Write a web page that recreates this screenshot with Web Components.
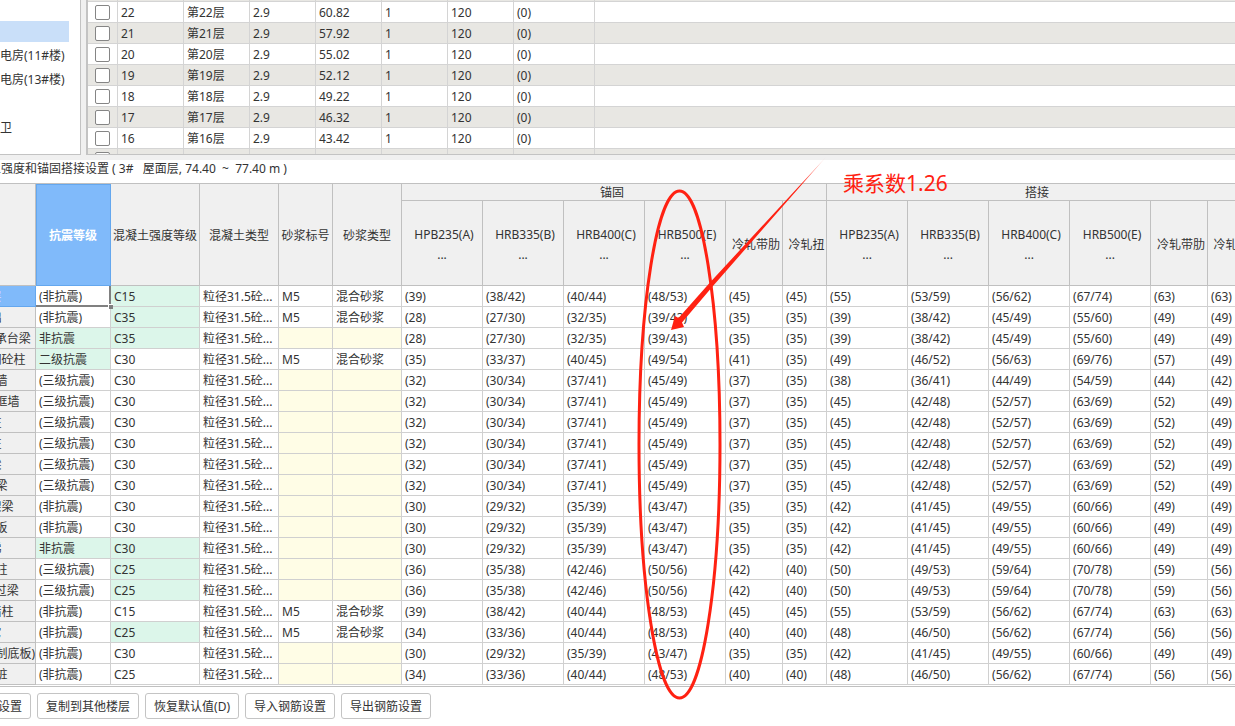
<!DOCTYPE html>
<html lang="zh-CN">
<head>
<meta charset="utf-8">
<title>楼层设置</title>
<style>
html, body { margin: 0; height: 100%; }
body { background: #fff; color: #333; font: 12px/20px "Noto Sans", "Noto Sans CJK SC", sans-serif; overflow: hidden; }
</style>
</head>
<body>
<floor-settings></floor-settings>

<template id="floor-settings">
  <style>
    :host { display: flex; flex-direction: column; min-height: 100vh; position: relative; overflow: hidden; }
    .top { display: flex; gap: 5px; height: 155px; padding-bottom: 5px; background: #f0f0f0; }
    project-tree { flex: 0 0 81px; }
    floor-table { flex: 1; min-width: 0; }
    h1 { margin: 0 0 0 -11px; padding: 0 0 5px; font-size: 12px; line-height: 18px; font-weight: 400; white-space: pre; }
    .actions { display: flex; gap: 6px; margin: 6px 0 0 -59px; }
  </style>
  <div class="top">
    <project-tree></project-tree>
    <floor-table></floor-table>
  </div>
  <h1>土强度和锚固搭接设置 ( 3#   屋面层, 74.40  ~  77.40 m )</h1>
  <rebar-table></rebar-table>
  <div class="actions">
    <action-button>基本锚固设置</action-button>
    <action-button>复制到其他楼层</action-button>
    <action-button>恢复默认值(D)</action-button>
    <action-button>导入钢筋设置</action-button>
    <action-button>导出钢筋设置</action-button>
  </div>
  <mark-up>乘系数1.26</mark-up>
</template>

<template id="project-tree">
  <style>
    :host { display: block; box-sizing: border-box; background: #fff; border: solid #c3c3c3; border-width: 0 1px 1px 0; }
    ul { list-style: none; margin: 0; padding: 21px 11px 0 0; display: grid; grid-auto-rows: 21px; row-gap: 3px; }
    li { line-height: 21px; white-space: nowrap; }
    .on { background: #c9dff9; }
  </style>
  <ul><li class="on"></li><li>电房(11#楼)</li><li>电房(13#楼)</li><li></li><li>卫</li></ul>
</template>

<template id="floor-table">
  <style>
    :host { display: block; box-sizing: border-box; overflow: hidden; background: #fff; border: solid #c3c3c3; border-width: 0 0 1px 2px; }
    table { width: 100%; margin-top: -19px; table-layout: fixed; border-collapse: separate; border-spacing: 0; }
    td { box-sizing: border-box; height: 21px; padding: 2px 3px 0; line-height: 18px; border: solid #d4d4d4; border-width: 0 1px 1px 0; }
    td:last-child { border-right: 0; }
    tr:nth-child(odd) { background: #e8e7e3; }
    td.check { padding: 0; }
    input { appearance: none; display: block; box-sizing: border-box; width: 15px; height: 15px; margin: 0 auto; border: 1px solid #858585; border-radius: 2px; background: #fff; }
  </style>
  <table>
    <colgroup><col style="width:30px"><col style="width:66px"><col style="width:66px"><col style="width:66px"><col style="width:66px"><col style="width:66px"><col style="width:66px"><col style="width:81px"><col></colgroup>
    <tbody></tbody>
  </table>
</template>

<template id="rebar-table">
  <style>
    :host { display: block; overflow: hidden; border: solid #c0c0c0; border-width: 1px 0; padding-bottom: 1px; }
    table { width: 1308px; margin-left: -56px; table-layout: fixed; border-collapse: separate; border-spacing: 0; }
    th, td { box-sizing: border-box; border: solid #d0d0d0; border-width: 0 1px 1px 0; font-weight: 400; white-space: nowrap; overflow: hidden; }
    td { height: 21px; padding: 2px 3px 0; line-height: 18px; }
    th { padding: 3px 0 0; text-align: center; background: #f0f0f0; border-color: #c0c0c0; line-height: 20px; }
    .group { height: 17px; padding: 2px 4px 0 0; line-height: 14px; }
    .bar { height: 85px; padding-top: 4px; text-indent: 4px; }
    .active { background: #80bafa; color: #fff; border-color: #64a7ee; font-weight: 700; box-shadow: inset 1px 1px #64a7ee; }
    .row { height: 21px; padding-top: 2px; line-height: 18px; }
    .row.on { background: #80bafa; color: #e6e0fa; border-color: #64a7ee; }
    .green { background: #dcf6ea; }
    .yellow { background: #fffde6; }
    .cursor { position: relative; overflow: visible; border-color: #808080; box-shadow: inset -1px -1px #808080; }
    .cursor::after { content: ""; position: absolute; right: -3px; bottom: -3px; width: 4px; height: 4px; background: #808080; border: solid #fff; border-width: 1px 0 0 1px; }
  </style>
  <table>
    <colgroup></colgroup>
    <thead></thead>
    <tbody></tbody>
  </table>
</template>

<template id="action-button">
  <style>
    :host { display: block; }
    button { display: block; box-sizing: border-box; height: 26px; padding: 1px 8px 0; border: 1px solid #c4c4c4; border-radius: 3px; background: #fff; color: inherit; font: inherit; line-height: 22px; white-space: nowrap; }
  </style>
  <button type="button"><slot></slot></button>
</template>

<template id="mark-up">
  <style>
    :host { position: absolute; inset: 0; pointer-events: none; color: #ff2112; }
    svg { position: absolute; left: 0; top: 0; width: 1235px; height: 726px; }
    span { position: absolute; left: 843px; top: 168px; font-size: 21px; line-height: 30px; white-space: nowrap; }
  </style>
  <svg viewBox="0 0 1235 726" fill="none" aria-hidden="true">
    <defs><linearGradient id="fade" gradientUnits="userSpaceOnUse" x1="826" y1="157" x2="800" y2="186"><stop stop-color="#ff2112" stop-opacity=".2"/><stop offset="1" stop-color="#ff2112"/></linearGradient></defs>
    <ellipse cx="679.5" cy="444.5" rx="40.5" ry="253.5" stroke="#ff2112" stroke-width="3"/>
    <path fill="url(#fade)" d="M826 157 713 286 682 322.500 684 327 671 330 675 316 678.500 318 709.500 283Z"/>
  </svg>
  <span><slot></slot></span>
</template>

<script>
function stamp(host, id) {
  const root = host.attachShadow({ mode: "open" });
  root.append(document.getElementById(id).content.cloneNode(true));
  return root;
}
for (const id of ["project-tree", "action-button", "mark-up"]) {
  customElements.define(id, class extends HTMLElement {
    constructor() { super(); stamp(this, id); }
  });
}

customElements.define("floor-table", class extends HTMLElement {
  constructor() {
    super();
    const body = stamp(this, "floor-table").querySelector("tbody");
    for (let n = 23; n >= 15; n--) {
      const top = (43.42 + (n - 16) * 2.9).toFixed(2);
      const hidden = n === 23 || n === 15;
      const cells = hidden ? Array(8).fill("") : [n, `第${n}层`, "2.9", top, "1", "120", "(0)", ""];
      body.insertAdjacentHTML("beforeend",
        `<tr><td class="check"><input type="checkbox" aria-label="第${n}层"></td>${cells.map(c => `<td>${c}</td>`).join("")}</tr>`);
    }
  }
});

const WIDTHS = [92, 75, 89, 79, 54, 69, 81, 81, 81, 81, 57, 44, 81, 81, 81, 81, 57, 44];
const BARS = ["HPB235(A)<br>...", "HRB335(B)<br>...", "HRB400(C)<br>...", "HRB500(E)<br>...", "冷轧带肋", "冷轧扭"];
/* name | seismic grade | concrete | has mortar | anchorage and lap values; "*" marks an edited cell */
const ROWS = `
垫层|(非抗震)|*C15|1|39 38/42 40/44 48/53 45 45 55 53/59 56/62 67/74 63 63
基础|(非抗震)|*C35|1|28 27/30 32/35 39/43 35 35 39 38/42 45/49 55/60 49 49
基础梁 / 承台梁|*非抗震|*C35|0|28 27/30 32/35 39/43 35 35 39 38/42 45/49 55/60 49 49
异形型钢砼柱|*二级抗震|C30|1|35 33/37 40/45 49/54 41 35 49 46/52 56/63 69/76 57 49
剪力墙|(三级抗震)|C30|0|32 30/34 37/41 45/49 37 35 38 36/41 44/49 54/59 44 42
人防门框墙|(三级抗震)|C30|0|32 30/34 37/41 45/49 37 35 45 42/48 52/57 63/69 52 49
暗柱|(三级抗震)|C30|0|32 30/34 37/41 45/49 37 35 45 42/48 52/57 63/69 52 49
端柱|(三级抗震)|C30|0|32 30/34 37/41 45/49 37 35 45 42/48 52/57 63/69 52 49
墙梁|(三级抗震)|C30|0|32 30/34 37/41 45/49 37 35 45 42/48 52/57 63/69 52 49
框架梁|(三级抗震)|C30|0|32 30/34 37/41 45/49 37 35 45 42/48 52/57 63/69 52 49
非框架梁|(非抗震)|C30|0|30 29/32 35/39 43/47 35 35 42 41/45 49/55 60/66 49 49
现浇板|(非抗震)|C30|0|30 29/32 35/39 43/47 35 35 42 41/45 49/55 60/66 49 49
楼梯|*非抗震|*C30|0|30 29/32 35/39 43/47 35 35 42 41/45 49/55 60/66 49 49
构造柱|(三级抗震)|*C25|0|36 35/38 42/46 50/56 42 40 50 49/53 59/64 70/78 59 56
圈梁 / 过梁|(三级抗震)|*C25|0|36 35/38 42/46 50/56 42 40 50 49/53 59/64 70/78 59 56
砌体墙柱|(非抗震)|C15|1|39 38/42 40/44 48/53 45 45 55 53/59 56/62 67/74 63 63
其它|(非抗震)|*C25|1|34 33/36 40/44 48/53 40 40 48 46/50 56/62 67/74 56 56
叠合板(预制底板)|(非抗震)|C30|0|30 29/32 35/39 43/47 35 35 42 41/45 49/55 60/66 49 49
支护桩|(非抗震)|C25|0|34 33/36 40/44 48/53 40 40 48 46/50 56/62 67/74 56 56`.trim().split("\n");

customElements.define("rebar-table", class extends HTMLElement {
  constructor() {
    super();
    const root = stamp(this, "rebar-table");
    root.querySelector("colgroup").innerHTML = WIDTHS.map(w => `<col style="width:${w}px">`).join("");
    const bars = BARS.map(b => `<th class="bar" scope="col">${b}</th>`).join("");
    root.querySelector("thead").innerHTML =
      `<tr><th rowspan="2"></th><th rowspan="2" class="active" scope="col">抗震等级</th>` +
      ["混凝土强度等级", "混凝土类型", "砂浆标号", "砂浆类型"].map(t => `<th rowspan="2" scope="col">${t}</th>`).join("") +
      `<th class="group" colspan="6">锚固</th><th class="group" colspan="6">搭接</th></tr><tr>${bars}${bars}</tr>`;
    const cell = (t, extra = "") => `<td class="${t[0] === "*" ? "green" : ""} ${extra}">${t.replace("*", "")}</td>`;
    root.querySelector("tbody").innerHTML = ROWS.map((line, i) => {
      const [name, grade, concrete, mortar, values] = line.split("|");
      return `<tr><th scope="row" class="row ${i ? "" : "on"}">${name}</th>` +
        cell(grade, i ? "" : "cursor") + cell(concrete) + cell("粒径31.5砼...") +
        (mortar === "1" ? cell("M5") + cell("混合砂浆") : `<td class="yellow"></td><td class="yellow"></td>`) +
        values.split(" ").map(v => cell(`(${v})`)).join("") + "</tr>";
    }).join("");
  }
});

customElements.define("floor-settings", class extends HTMLElement {
  constructor() { super(); stamp(this, "floor-settings"); }
});
</script>
</body>
</html>
